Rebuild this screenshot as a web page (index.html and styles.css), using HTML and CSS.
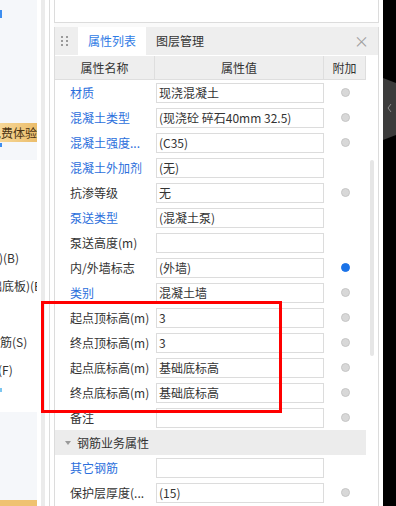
FILE: index.html
```html
<!DOCTYPE html>
<html lang="zh-CN">
<head>
    <meta charset="UTF-8">
    <meta name="viewport" content="width=device-width, initial-scale=1.0">
    <title>属性列表</title>
    <link rel="stylesheet" href="styles.css">
</head>
<body>
    <div class="page">
        <div class="sidebar">
            <div class="side-top">
                <div class="tick tick-a"></div>
                <div class="badge">免费体验</div>
                <div class="tick tick-b"></div>
            </div>
            <div class="side-mid">
                <div class="side-line ind-b">础梁)(B)</div>
                <div class="side-line ind-c">础底板)(B)</div>
                <div class="side-line"></div>
                <div class="side-line ind-s">钢筋(S)</div>
                <div class="side-line ind-f">(F)</div>
                <div class="tick tick-c"></div>
            </div>
            <div class="side-bot"></div>
            <div class="side-foot"></div>
        </div>
        <div class="strip-white"></div>
        <div class="strip-track"></div>
        <div class="strip-white"></div>
        <div class="strip-line"></div>
        <div class="strip-white"></div>

        <div class="workspace">
            <div class="top-box"></div>
            <div class="panel">
                <div class="tabbar">
                    <div class="handle">
                        <span></span><span></span>
                        <span></span><span></span>
                        <span></span><span></span>
                    </div>
                    <div class="tab active">属性列表</div>
                    <div class="tab">图层管理</div>
                    <div class="close">×</div>
                </div>
                <div class="panel-body">
                    <div class="grid">
                        <div class="row head">
                            <div class="hcell">属性名称</div>
                            <div class="hcell">属性值</div>
                            <div class="hcell">附加</div>
                        </div>
                        <div class="row">
                            <div class="name link">材质</div>
                            <div class="value"><div class="box">现浇混凝土</div></div>
                            <div class="extra"><span class="dot"></span></div>
                        </div>
                        <div class="row">
                            <div class="name link">混凝土类型</div>
                            <div class="value"><div class="box">(现浇砼 碎石40mm 32.5)</div></div>
                            <div class="extra"><span class="dot"></span></div>
                        </div>
                        <div class="row">
                            <div class="name link">混凝土强度...</div>
                            <div class="value"><div class="box">(C35)</div></div>
                            <div class="extra"><span class="dot"></span></div>
                        </div>
                        <div class="row">
                            <div class="name link">混凝土外加剂</div>
                            <div class="value"><div class="box">(无)</div></div>
                            <div class="extra"></div>
                        </div>
                        <div class="row">
                            <div class="name">抗渗等级</div>
                            <div class="value"><div class="box">无</div></div>
                            <div class="extra"><span class="dot"></span></div>
                        </div>
                        <div class="row">
                            <div class="name link">泵送类型</div>
                            <div class="value"><div class="box">(混凝土泵)</div></div>
                            <div class="extra"></div>
                        </div>
                        <div class="row">
                            <div class="name">泵送高度(m)</div>
                            <div class="value"><div class="box"></div></div>
                            <div class="extra"></div>
                        </div>
                        <div class="row">
                            <div class="name">内/外墙标志</div>
                            <div class="value"><div class="box">(外墙)</div></div>
                            <div class="extra"><span class="dot on"></span></div>
                        </div>
                        <div class="row">
                            <div class="name link">类别</div>
                            <div class="value"><div class="box">混凝土墙</div></div>
                            <div class="extra"><span class="dot"></span></div>
                        </div>
                        <div class="row">
                            <div class="name">起点顶标高(m)</div>
                            <div class="value"><div class="box">3</div></div>
                            <div class="extra"><span class="dot"></span></div>
                        </div>
                        <div class="row">
                            <div class="name">终点顶标高(m)</div>
                            <div class="value"><div class="box">3</div></div>
                            <div class="extra"><span class="dot"></span></div>
                        </div>
                        <div class="row">
                            <div class="name">起点底标高(m)</div>
                            <div class="value"><div class="box">基础底标高</div></div>
                            <div class="extra"><span class="dot"></span></div>
                        </div>
                        <div class="row">
                            <div class="name">终点底标高(m)</div>
                            <div class="value"><div class="box">基础底标高</div></div>
                            <div class="extra"><span class="dot"></span></div>
                        </div>
                        <div class="row">
                            <div class="name">备注</div>
                            <div class="value"><div class="box"></div></div>
                            <div class="extra"><span class="dot"></span></div>
                        </div>
                        <div class="group">
                            <span class="caret"></span>钢筋业务属性
                        </div>
                        <div class="row">
                            <div class="name link">其它钢筋</div>
                            <div class="value"><div class="box"></div></div>
                            <div class="extra"></div>
                        </div>
                        <div class="row">
                            <div class="name">保护层厚度(...</div>
                            <div class="value"><div class="box">(15)</div></div>
                            <div class="extra"><span class="dot"></span></div>
                        </div>
                    </div>
                    <div class="gutter"><div class="thumb"></div></div>
                </div>
            </div>
        </div>

        <div class="strip-white"></div>
        <div class="edge">
            <svg class="edge-tab" width="13" height="62" viewBox="0 0 13 62">
                <polygon points="0,0 13,5 13,57 0,62" fill="#3b3b3b"/>
                <polyline points="8,26 5,30 8,34" fill="none" stroke="#8a8a8a" stroke-width="1"/>
            </svg>
        </div>
    </div>

    <!-- 红框标注 -->
    <div class="mark"></div>
</body>
</html>
```

FILE: styles.css
```css
body {
    margin: 0;
    font-family: "Noto Sans CJK SC", "Microsoft YaHei", sans-serif;
    font-size: 12px;
    color: #333;
    background: #fff;
    position: relative;
    overflow: hidden;
}

.page {
    display: flex;
    height: 506px;
    width: 396px;
}

/* 左侧菜单（被遮住的部分） */
.sidebar {
    width: 37px;
    display: flex;
    flex-direction: column;
    overflow: hidden;
    flex-shrink: 0;
}

.side-top {
    height: 160px;
    background: #f5f7fa;
    position: relative;
}

.side-mid {
    height: 252px;
    background: #fff;
    padding-top: 84px;
    box-sizing: border-box;
    position: relative;
}

.side-bot {
    height: 88px;
    background: #f5f7fa;
}

.side-foot {
    flex: 1;
    background: #efc271;
}

.tick {
    width: 2px;
    background: #3d8ef0;
}

.tick-a {
    height: 8px;
    margin-top: 10px;
}

.badge {
    margin-top: 105px;
    height: 19px;
    line-height: 19px;
    background: linear-gradient(to right, #f6d797, #ebbd6b);
    color: #4a3312;
    white-space: nowrap;
    text-indent: -11px;
    overflow: hidden;
    font-size: 12px;
}

.tick-b {
    height: 4px;
    margin-top: 1px;
}

.tick-c {
    height: 4px;
    margin-top: 4px;
    background: #7cc6f0;
}

.side-line {
    height: 28px;
    line-height: 28px;
    white-space: nowrap;
}

.ind-b { margin-left: -25px; }
.ind-c { margin-left: -10px; }
.ind-s { margin-left: -12px; }
.ind-f { margin-left: -2px; }

.strip-white {
    width: 4px;
    flex-shrink: 0;
    background: #fff;
}

.strip-track {
    width: 4px;
    flex-shrink: 0;
    background: #ebebeb;
}

.strip-line {
    width: 1px;
    flex-shrink: 0;
    background: #dcdcdc;
}

/* 属性面板 */
.workspace {
    width: 325px;
    flex-shrink: 0;
    background: #fafafa;
    display: flex;
    flex-direction: column;
}

.top-box {
    height: 22px;
    background: #fff;
    border: 1px solid #dcdcdc;
    border-top: none;
}

.panel {
    margin-top: 4px;
    flex: 1;
    background: #fff;
    border-left: 1px solid #dcdcdc;
    border-right: 1px solid #dcdcdc;
}

.tabbar {
    height: 28px;
    background: #eeeeee;
    display: flex;
    align-items: stretch;
}

.handle {
    width: 8px;
    margin: 0 9px 0 6px;
    display: grid;
    grid-template-columns: 2px 2px;
    column-gap: 3px;
    row-gap: 2px;
    align-content: center;
}

.handle span {
    width: 2px;
    height: 2px;
    background: #9a9a9a;
}

.tab {
    line-height: 28px;
    padding: 0 10px;
    font-size: 12px;
}

.tab.active {
    background: #fff;
    color: #2f7be5;
}

.close {
    margin-left: auto;
    margin-right: 9px;
    line-height: 28px;
    font-size: 15px;
    color: #a0a0a0;
}

.panel-body {
    display: flex;
    margin-top: 1px;
}

.grid {
    width: 311px;
}

.row {
    display: grid;
    grid-template-columns: 100px 169px 42px;
    height: 25px;
}

.row.head {
    height: 24px;
}

.hcell {
    background: #eeeeee;
    border-right: 1px solid #dedede;
    border-bottom: 1px solid #dedede;
    text-align: center;
    line-height: 23px;
    font-size: 12px;
}

.name {
    padding-left: 15px;
    line-height: 25px;
    white-space: nowrap;
    overflow: hidden;
}

.name.link {
    color: #2c6fdc;
}

.value {
    display: flex;
    align-items: center;
    padding-left: 1px;
}

.box {
    flex: 1;
    height: 18px;
    line-height: 18px;
    border: 1px solid #dcdcdc;
    padding-left: 2px;
    white-space: nowrap;
    overflow: hidden;
}

.extra {
    display: flex;
    justify-content: center;
    align-items: center;
}

.dot {
    width: 7px;
    height: 7px;
    border-radius: 50%;
    background: #d8d8d8;
    border: 1px solid #c6c6c6;
}

.dot.on {
    background: #1a73e8;
    border-color: #1a73e8;
}

.group {
    height: 25px;
    line-height: 25px;
    background: #ececec;
    padding-left: 10px;
    font-size: 12px;
    display: flex;
    align-items: center;
}

.caret {
    width: 0;
    height: 0;
    border-left: 3px solid transparent;
    border-right: 3px solid transparent;
    border-top: 4px solid #999;
    margin-right: 6px;
}

.gutter {
    width: 12px;
}

.thumb {
    width: 4px;
    height: 196px;
    margin: 104px 0 0 4px;
    border-radius: 2px;
    background: #e6e6e6;
}

.edge {
    width: 13px;
    flex-shrink: 0;
    background: #000;
}

.edge-tab {
    display: block;
    margin-top: 78px;
}

/* 标注框 */
.mark {
    position: absolute;
    left: 41px;
    top: 301px;
    width: 235px;
    height: 106px;
    border: 3px solid #ff0000;
}
```
